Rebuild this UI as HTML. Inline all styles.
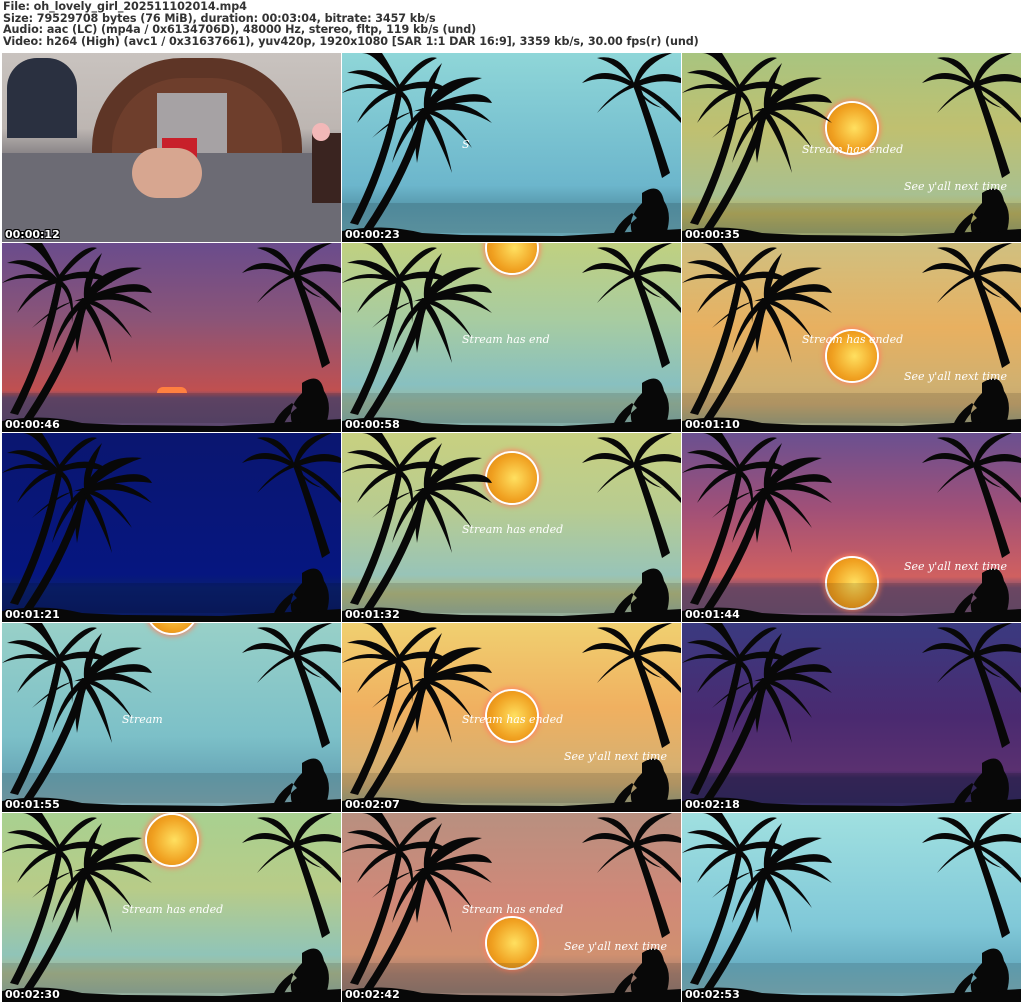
<!DOCTYPE html>
<html><head><meta charset="utf-8"><style>
body{margin:0;width:1024px;height:1003px;background:#fff;position:relative;overflow:hidden;font-family:"DejaVu Sans",sans-serif}
.hdr{position:absolute;left:3px;top:1px;font-weight:bold;font-size:11.2px;line-height:11.7px;color:#333;white-space:pre;letter-spacing:-0.1px}
.c{position:absolute;width:339px;height:189px;overflow:hidden}
.c svg{position:absolute;left:0;top:0}
.t{position:absolute;left:3px;bottom:1px;color:#fff;font-weight:bold;font-size:11px;text-shadow:1px 1px 0 #000,-1px -1px 0 #000,1px -1px 0 #000,-1px 1px 0 #000}
.s{position:absolute;color:#fff;font-family:"DejaVu Serif",serif;font-style:italic;font-size:11px}
.sun{position:absolute;width:50px;height:50px;border-radius:50%;background:radial-gradient(circle at 55% 50%,#ffe060,#f0a020 60%,#d88010);box-shadow:0 0 0 2px #fff,0 0 6px 3px #ff8060}
</style></head><body>
<div class="hdr">File: oh_lovely_girl_202511102014.mp4
Size: 79529708 bytes (76 MiB), duration: 00:03:04, bitrate: 3457 kb/s
Audio: aac (LC) (mp4a / 0x6134706D), 48000 Hz, stereo, fltp, 119 kb/s (und)
Video: h264 (High) (avc1 / 0x31637661), yuv420p, 1920x1080 [SAR 1:1 DAR 16:9], 3359 kb/s, 30.00 fps(r) (und)</div>

<svg width="0" height="0" style="position:absolute"><defs>
<g id="p" fill="#080808">
<rect x="0" y="150" width="339" height="30" fill="#000" opacity="0.12"/>
<path d="M0 189 L0 178 Q40 170 80 180 L120 182 L220 183 L339 176 L339 189Z"/>
<path d="M8 170 Q40 110 55 35 L61 36 Q48 110 16 172Z"/>
<path d="M20 178 Q60 120 80 55 L87 56 Q68 122 28 180Z"/>
<path d="M55 35 Q30 10 5 20 Q30 20 50 40Z M55 35 Q35 0 20 0 L40 0 Q50 15 58 33Z M55 35 Q80 0 95 5 Q75 15 58 38Z M55 35 Q90 20 110 40 Q80 30 57 40Z M55 35 Q30 40 15 70 Q35 45 55 40Z M55 35 Q50 60 40 95 Q58 60 58 38Z M55 35 Q20 25 0 40 Q25 30 55 40Z M55 35 Q75 45 70 80 Q70 50 55 40Z"/>
<path d="M82 55 Q100 20 140 25 Q110 35 85 58Z M82 55 Q120 40 150 70 Q115 50 85 60Z M82 55 Q100 70 110 120 Q95 80 80 60Z M82 55 Q60 60 30 85 Q60 55 82 58Z M82 55 Q70 80 75 110 Q80 80 85 60Z M82 55 Q140 30 150 50 Q120 45 85 58Z M82 55 Q110 60 130 95 Q105 65 84 60Z M82 55 Q60 70 50 110 Q65 75 84 60Z M82 55 Q80 30 100 10 Q90 35 86 56Z"/>
<path d="M320 125 Q305 70 290 30 L296 28 Q312 70 328 120Z"/>
<path d="M292 30 Q260 10 240 30 Q265 20 290 34Z M292 30 Q300 0 330 0 Q305 10 295 32Z M292 30 Q320 15 339 25 L339 30 Q315 25 295 34Z M292 30 Q270 40 255 60 Q275 40 293 34Z M292 30 Q300 50 320 55 Q300 45 295 33Z M292 30 Q280 0 255 5 Q275 10 292 32Z M292 30 Q320 40 339 65 L339 70 Q315 45 294 34Z"/>
<path d="M300 140 Q318 128 322 148 Q330 160 325 178 L290 180 Q285 165 300 150Z M290 160 Q275 170 270 185 L280 185 Q285 172 295 165Z"/>
</g></defs></svg>

<div class="c" style="left:2px;top:53px;background:linear-gradient(#c9c3bf 0%,#bdb6b2 40%,#6f6c72 60%,#7a7880 100%)">
<div style="position:absolute;left:90px;top:5px;width:210px;height:100px;background:#5e3526;border-radius:90px 90px 0 0"></div>
<div style="position:absolute;left:110px;top:25px;width:170px;height:80px;background:#6e3e2c;border-radius:70px 70px 0 0"></div>
<div style="position:absolute;left:5px;top:5px;width:70px;height:80px;background:#2a3040;border-radius:30px 30px 0 0"></div>
<div style="position:absolute;left:0;top:100px;width:339px;height:89px;background:#6c6b74"></div>
<div style="position:absolute;left:155px;top:40px;width:70px;height:60px;background:#a6a2a4"></div>
<div style="position:absolute;left:160px;top:85px;width:35px;height:20px;background:#c8202a"></div>
<div style="position:absolute;left:130px;top:95px;width:70px;height:50px;background:#d7a690;border-radius:30px"></div>
<div style="position:absolute;left:310px;top:80px;width:29px;height:70px;background:#3a2420"></div>
<div style="position:absolute;left:310px;top:70px;width:18px;height:18px;border-radius:50%;background:#f2b8b8"></div>
<div class="t">00:00:12</div></div>

<div class="c" style="left:342px;top:53px;background:linear-gradient(#8fd6d8,#6cb6cc 70%,#5a9cb0 80%,#6aa6b4)"><svg width="339" height="189"><use href="#p"/></svg><div class="s" style="left:120px;top:85px">S</div><div class="t">00:00:23</div></div>

<div class="c" style="left:682px;top:53px;background:linear-gradient(#a8c480,#c0c070 40%,#a8c090 75%,#b8b060 85%,#8a9a70)"><div class="sun" style="left:145px;top:50px"></div><svg width="339" height="189"><use href="#p"/></svg><div class="s" style="left:120px;top:90px">Stream has ended</div><div class="s" style="left:222px;top:127px">See y'all next time</div><div class="t">00:00:35</div></div>

<div class="c" style="left:2px;top:243px;background:linear-gradient(#6a4c8c,#8a5478 40%,#c05050 78%,#6a4c70 82%,#5a4870)"><svg width="339" height="189"><use href="#p"/></svg><div style="position:absolute;left:155px;top:144px;width:30px;height:6px;background:#ff8040;border-radius:10px 10px 0 0"></div><div class="t">00:00:46</div></div>

<div class="c" style="left:342px;top:243px;background:linear-gradient(#c0d080,#a8cca0 40%,#88c0c0 75%,#98b8a0 85%,#7aa8a8)"><div class="sun" style="left:145px;top:-20px"></div><svg width="339" height="189"><use href="#p"/></svg><div class="s" style="left:120px;top:90px">Stream has end</div><div class="t">00:00:58</div></div>

<div class="c" style="left:682px;top:243px;background:linear-gradient(#d0c080,#e8b060 45%,#d0b070 75%,#c8a870 85%,#8a9a80)"><svg width="339" height="189"><use href="#p"/></svg><div class="sun" style="left:145px;top:88px"></div><div class="s" style="left:120px;top:90px">Stream has ended</div><div class="s" style="left:222px;top:127px">See y'all next time</div><div class="t">00:01:10</div></div>

<div class="c" style="left:2px;top:433px;background:linear-gradient(#0a1670,#061680 75%,#0a2070 82%,#0a1a60)"><svg width="339" height="189"><use href="#p"/></svg><div class="t">00:01:21</div></div>

<div class="c" style="left:342px;top:433px;background:linear-gradient(#c8d080,#b8cc90 40%,#98c4b8 75%,#b0b880 85%,#8aa8a0)"><div class="sun" style="left:145px;top:20px"></div><svg width="339" height="189"><use href="#p"/></svg><div class="s" style="left:120px;top:90px">Stream has ended</div><div class="t">00:01:32</div></div>

<div class="c" style="left:682px;top:433px;background:linear-gradient(#6a5090,#a05078 40%,#d06060 76%,#7a5070 82%,#6a5070)"><div class="sun" style="left:145px;top:125px"></div><svg width="339" height="189"><use href="#p"/></svg><div class="s" style="left:222px;top:127px">See y'all next time</div><div class="t">00:01:44</div></div>

<div class="c" style="left:2px;top:623px;background:linear-gradient(#98d0c8,#7cc0c8 60%,#6aa8b8 80%,#80a8b0)"><div class="sun" style="left:145px;top:-40px"></div><svg width="339" height="189"><use href="#p"/></svg><div class="s" style="left:120px;top:90px">Stream</div><div class="t">00:01:55</div></div>

<div class="c" style="left:342px;top:623px;background:linear-gradient(#f0d070,#f0b060 45%,#d8b070 75%,#c8a870 85%,#8a9a80)"><div class="sun" style="left:145px;top:68px"></div><svg width="339" height="189"><use href="#p"/></svg><div class="s" style="left:120px;top:90px">Stream has ended</div><div class="s" style="left:222px;top:127px">See y'all next time</div><div class="t">00:02:07</div></div>

<div class="c" style="left:682px;top:623px;background:linear-gradient(#3a3a80,#4a2a70 50%,#5a3070 78%,#3a2a60 82%,#302a60)"><svg width="339" height="189"><use href="#p"/></svg><div class="t">00:02:18</div></div>

<div class="c" style="left:2px;top:813px;background:linear-gradient(#a8d090,#b8cc88 40%,#90c4b8 75%,#a8b890 85%,#8aa8a0)"><div class="sun" style="left:145px;top:2px"></div><svg width="339" height="189"><use href="#p"/></svg><div class="s" style="left:120px;top:90px">Stream has ended</div><div class="t">00:02:30</div></div>

<div class="c" style="left:342px;top:813px;background:linear-gradient(#b89080,#d08878 45%,#d09070 75%,#a88070 85%,#8a7870)"><div class="sun" style="left:145px;top:105px"></div><svg width="339" height="189"><use href="#p"/></svg><div class="s" style="left:120px;top:90px">Stream has ended</div><div class="s" style="left:222px;top:127px">See y'all next time</div><div class="t">00:02:42</div></div>

<div class="c" style="left:682px;top:813px;background:linear-gradient(#a0e0e0,#80c8d8 60%,#6ab0c4 80%,#80b0b8)"><svg width="339" height="189"><use href="#p"/></svg><div class="t">00:02:53</div></div>
</body></html>
